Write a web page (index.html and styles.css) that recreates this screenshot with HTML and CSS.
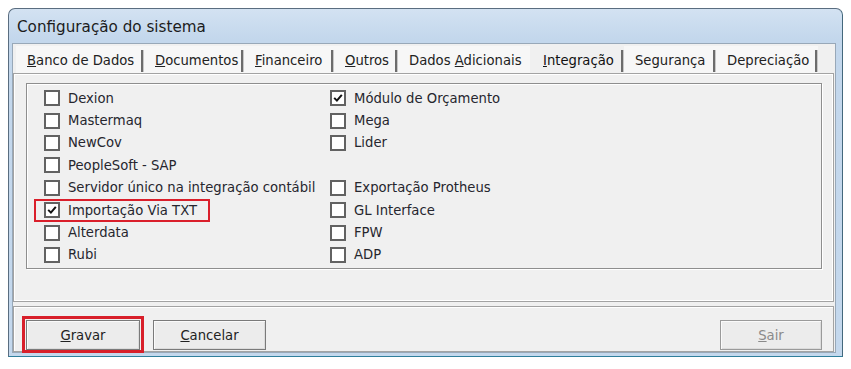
FILE: index.html
```html
<!DOCTYPE html>
<html lang="pt">
<head>
<meta charset="utf-8">
<title>Configuração do sistema</title>
<link rel="stylesheet" href="styles.css">
</head>
<body>
<div class="window">
  <div class="titlebar">Configuração do sistema</div>
  <div class="client">
    <div class="tabs">
      <div class="tab t1"><span><u>B</u>anco de Dados</span></div>
      <div class="tab t2"><span><u>D</u>ocumentos</span></div>
      <div class="tab t3"><span><u>F</u>inanceiro</span></div>
      <div class="tab t4"><span><u>O</u>utros</span></div>
      <div class="tab t5 nosep"><span>Dados <u>A</u>dicionais</span></div>
      <div class="tab t6 active"><span><u>I</u>ntegração</span></div>
      <div class="tab t7"><span>Segurança</span></div>
      <div class="tab t8"><span>Depreciação</span></div>
    </div>
    <div class="panel">
      <div class="group">
        <div class="grid">
          <label class="row"><span class="cb"></span><span>Dexion</span></label>
          <label class="row"><span class="cb"></span><span>Mastermaq</span></label>
          <label class="row"><span class="cb"></span><span>NewCov</span></label>
          <label class="row"><span class="cb"></span><span>PeopleSoft - SAP</span></label>
          <label class="row"><span class="cb"></span><span>Servidor único na integração contábil</span></label>
          <label class="row marked"><span class="cb"><svg viewBox="0 0 10 10" width="10" height="10"><path d="M1.2 4.9 L3.9 7.6 L8.8 1.8" fill="none" stroke="#111" stroke-width="2"/></svg></span><span>Importação Via TXT</span><span class="redbox"></span></label>
          <label class="row"><span class="cb"></span><span>Alterdata</span></label>
          <label class="row"><span class="cb"></span><span>Rubi</span></label>

          <label class="row"><span class="cb"><svg viewBox="0 0 10 10" width="10" height="10"><path d="M1.2 4.9 L3.9 7.6 L8.8 1.8" fill="none" stroke="#111" stroke-width="2"/></svg></span><span>Módulo de Orçamento</span></label>
          <label class="row"><span class="cb"></span><span>Mega</span></label>
          <label class="row"><span class="cb"></span><span>Lider</span></label>
          <div class="row empty"></div>
          <label class="row"><span class="cb"></span><span>Exportação Protheus</span></label>
          <label class="row"><span class="cb"></span><span>GL Interface</span></label>
          <label class="row"><span class="cb"></span><span>FPW</span></label>
          <label class="row"><span class="cb"></span><span>ADP</span></label>
        </div>
      </div>
    </div>
    <div class="buttonbar">
      <button class="btn gravar"><span><u>G</u>ravar</span><span class="redbox"></span></button>
      <button class="btn cancelar"><span><u>C</u>ancelar</span></button>
      <button class="btn sair" disabled><span><u>S</u>air</span></button>
    </div>
  </div>
</div>
</body>
</html>
```

FILE: styles.css
```css
* { box-sizing: border-box; }

body {
  margin: 0;
  background: #ffffff;
  font-family: "DejaVu Sans", "Liberation Sans", sans-serif;
  font-size: 13.2px;
  color: #26262e;
}

.window {
  margin: 8px 0 0 8px;
  width: 835px;
  height: 349px;
  border: 1px solid #5a6d80;
  border-bottom-color: #2f7f9c;
  border-right-color: #44687c;
  border-radius: 7px 7px 0 0;
  background: linear-gradient(#d3e2f2 0px, #c3d7ec 30px, #c4d8ed 100%);
  display: flex;
  flex-direction: column;
  padding: 0 6px 3px 3px;
}

.titlebar {
  height: 34px;
  display: flex;
  align-items: center;
  padding-left: 5px;
  padding-top: 1px;
  font-size: 15.2px;
  color: #1c1c1c;
}

.client {
  flex: 1;
  background: #f0f0f0;
  border: 1px solid #98a8b8;
  display: flex;
  flex-direction: column;
}

.tabs {
  height: 29px;
  padding: 2px 0 0 3px;
  display: flex;
}

.tab {
  position: relative;
  height: 27px;
  padding-left: 11px;
  padding-top: 1px;
  display: flex;
  align-items: center;
  background: #f7f7f7;
  white-space: nowrap;
  color: #222;
}

.tab::after {
  content: "";
  position: absolute;
  right: 0;
  top: 4px;
  bottom: 1px;
  width: 2px;
  background: #6c6c6c;
  border-right: 1px solid #c8c8c8;
}

.tab.nosep::after { display: none; }

.tab.active {
  background: #f0f0f0;
  padding-left: 13px;
  color: #111;
}

.t1 { width: 128px; }
.t2 { width: 100px; }
.t3 { width: 90px; }
.t4 { width: 64px; }
.t5 { width: 132px; }
.t6 { width: 94px; }
.t7 { width: 92px; }
.t8 { width: 102px; }

.panel {
  height: 229px;
  margin-right: 1px;
  border: 1px solid #a3a3a3;
  box-shadow: inset 1px 1px 0 #ffffff, inset -1px -1px 0 #ffffff;
  padding: 9px 11px 0 12px;
}

.group {
  height: 186px;
  border: 1px solid #8e8e8e;
  box-shadow: 1px 1px 0 #ffffff, inset 1px 1px 0 #ffffff;
  padding: 3px 0 0 17px;
}

.grid {
  display: grid;
  grid-template-columns: 286px 1fr;
  grid-template-rows: repeat(8, 22.4px);
  grid-auto-flow: column;
}

.row {
  position: relative;
  display: flex;
  align-items: center;
  white-space: nowrap;
}

.cb {
  width: 16px;
  height: 16px;
  margin-right: 8px;
  border: 2px solid #626262;
  background: #ffffff;
  display: flex;
  align-items: center;
  justify-content: center;
  flex-shrink: 0;
}

.cb svg {
  display: block;
  flex-shrink: 0;
}

.row.marked .redbox {
  position: absolute;
  left: -10px;
  top: 0;
  width: 176px;
  height: 23px;
  border: 2px solid #da1f2b;
}

.buttonbar {
  flex: 1;
  margin: 4px 1px 0 0;
  border: 1px solid #a3a3a3;
  box-shadow: inset 1px 1px 0 #ffffff;
  padding: 13px 11px 0 12px;
  display: flex;
  align-items: flex-start;
}

.btn {
  position: relative;
  height: 30px;
  font-family: inherit;
  font-size: 13.2px;
  color: #222;
  background: #ececec;
  border: 1px solid #7a7a7a;
  box-shadow: inset 1px 1px 0 #fafafa, inset -1px -1px 0 #dcdcdc;
  padding: 0;
  display: flex;
  align-items: center;
  justify-content: center;
}

.gravar { width: 114px; }
.cancelar { width: 113px; margin-left: 13px; }
.sair { width: 102px; margin-left: auto; color: #8a8a8a; border-color: #9a9a9a; }

.gravar .redbox {
  position: absolute;
  left: -5px;
  top: -5px;
  width: 122px;
  height: 37px;
  border: 3px solid #d81f2a;
}
```
